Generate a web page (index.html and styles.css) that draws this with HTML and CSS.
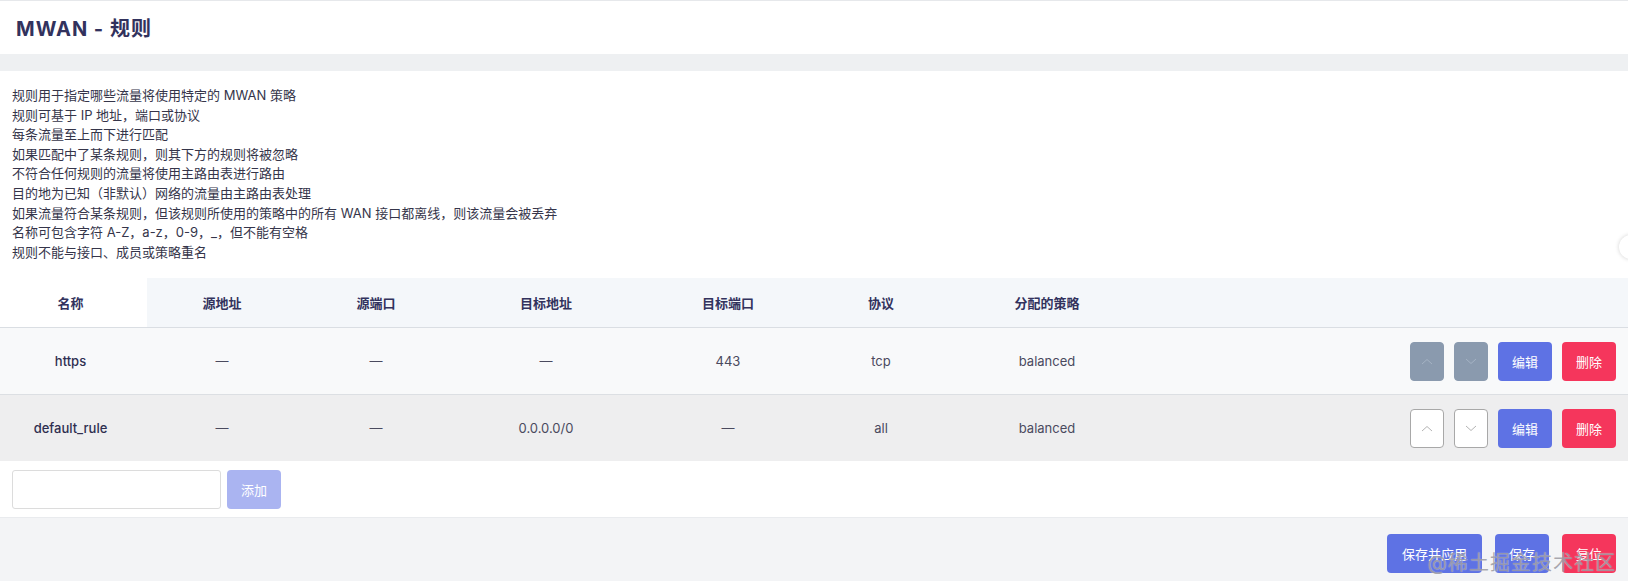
FILE: index.html
```html
<!DOCTYPE html>
<html lang="zh-CN">
<head>
    <meta charset="UTF-8">
    <meta name="viewport" content="width=device-width, initial-scale=1.0">
    <title>MWAN - 规则</title>
    <link rel="stylesheet" href="styles.css">
</head>
<body>
    <header class="topbar">
        <h2>MWAN - 规则</h2>
    </header>

    <main class="card">
        <div class="desc">
            规则用于指定哪些流量将使用特定的 MWAN 策略<br>
            规则可基于 IP 地址，端口或协议<br>
            每条流量至上而下进行匹配<br>
            如果匹配中了某条规则，则其下方的规则将被忽略<br>
            不符合任何规则的流量将使用主路由表进行路由<br>
            目的地为已知（非默认）网络的流量由主路由表处理<br>
            如果流量符合某条规则，但该规则所使用的策略中的所有 WAN 接口都离线，则该流量会被丢弃<br>
            名称可包含字符 A-Z，a-z，0-9，_，但不能有空格<br>
            规则不能与接口、成员或策略重名
        </div>

        <table class="rules">
            <thead>
                <tr>
                    <th class="col-name">名称</th>
                    <th class="col-src">源地址</th>
                    <th class="col-sport">源端口</th>
                    <th class="col-dst">目标地址</th>
                    <th class="col-dport">目标端口</th>
                    <th class="col-proto">协议</th>
                    <th class="col-policy">分配的策略</th>
                    <th class="col-actions"></th>
                </tr>
            </thead>
            <tbody>
                <tr class="row-odd">
                    <td class="name">https</td>
                    <td>—</td>
                    <td>—</td>
                    <td>—</td>
                    <td>443</td>
                    <td>tcp</td>
                    <td>balanced</td>
                    <td class="actions">
                        <button class="btn-move disabled" title="上移">
                            <svg width="12" height="7" viewBox="0 0 12 7"><path d="M1 6 L6 1.5 L11 6" fill="none" stroke="currentColor" stroke-width="1"/></svg>
                        </button>
                        <button class="btn-move disabled" title="下移">
                            <svg width="12" height="7" viewBox="0 0 12 7"><path d="M1 1 L6 5.5 L11 1" fill="none" stroke="currentColor" stroke-width="1"/></svg>
                        </button>
                        <button class="btn btn-edit">编辑</button>
                        <button class="btn btn-remove">删除</button>
                    </td>
                </tr>
                <tr class="row-even">
                    <td class="name">default_rule</td>
                    <td>—</td>
                    <td>—</td>
                    <td>0.0.0.0/0</td>
                    <td>—</td>
                    <td>all</td>
                    <td>balanced</td>
                    <td class="actions">
                        <button class="btn-move" title="上移">
                            <svg width="12" height="7" viewBox="0 0 12 7"><path d="M1 6 L6 1.5 L11 6" fill="none" stroke="currentColor" stroke-width="1"/></svg>
                        </button>
                        <button class="btn-move" title="下移">
                            <svg width="12" height="7" viewBox="0 0 12 7"><path d="M1 1 L6 5.5 L11 1" fill="none" stroke="currentColor" stroke-width="1"/></svg>
                        </button>
                        <button class="btn btn-edit">编辑</button>
                        <button class="btn btn-remove">删除</button>
                    </td>
                </tr>
            </tbody>
        </table>

        <div class="add-row">
            <input type="text" class="add-input">
            <button class="btn btn-add">添加</button>
        </div>
    </main>

    <footer class="page-actions">
        <button class="btn btn-apply">保存并应用</button>
        <button class="btn btn-save">保存</button>
        <button class="btn btn-reset">复位</button>
        <span class="watermark">@稀土掘金技术社区</span>
    </footer>

    <div class="side-dot"></div>
</body>
</html>
```

FILE: styles.css
```css
body {
    margin: 0;
    padding: 0;
    background-color: #eef0f2;
    font-family: Inter, "Noto Sans CJK SC", sans-serif;
    font-size: 13px;
    color: #32325d;
    position: relative;
    overflow: hidden;
}
.topbar {
    background-color: #fff;
    border-top: 1px solid #e6e8eb;
    height: 53px;
    display: flex;
    align-items: center;
    padding: 0 16px;
}
.topbar h2 {
    margin: 0;
    font-size: 20px;
    font-weight: 700;
    letter-spacing: 1px;
    color: #32325d;
}
.card {
    margin-top: 17px;
    background-color: #fff;
}
.desc {
    padding: 15px 12px 16px;
    line-height: 19.6px;
    color: #35354a;
}

/* table */
.rules {
    width: 100%;
    border-collapse: collapse;
    table-layout: fixed;
}
.rules th {
    height: 49px;
    padding: 0;
    font-weight: 700;
    text-align: center;
    background-color: #f4f7fa;
    border-bottom: 1px solid #dadee3;
}
.rules th.col-name {
    background-color: #fff;
}
.col-name { width: 141px; }
.col-src { width: 150px; }
.col-sport { width: 158px; }
.col-dst { width: 182px; }
.col-dport { width: 182px; }
.col-proto { width: 124px; }
.col-policy { width: 208px; }
.rules th.col-name,
.rules td.name {
    padding-right: 6px;
}
.rules td {
    height: 66px;
    padding: 0;
    text-align: center;
    color: #4a4a5e;
}
.rules td.name {
    color: #2e2e50;
    font-weight: 500;
}
.row-odd td {
    background-color: #f8f9fa;
    border-bottom: 1px solid #dcdfe3;
}
.row-even td {
    background-color: #eeeeef;
}
.rules td.actions {
    text-align: right;
    padding-right: 12px;
    font-size: 0;
}
.actions button {
    margin-left: 10px;
    vertical-align: middle;
}

/* buttons */
.btn {
    height: 39px;
    padding: 0 14px;
    border: none;
    border-radius: 4px;
    color: #fff;
    font-family: Inter, "Noto Sans CJK SC", sans-serif;
    font-size: 13px;
    cursor: pointer;
}
.btn-edit,
.btn-apply,
.btn-save {
    background-color: #5e72e4;
}
.btn-remove,
.btn-reset {
    background-color: #f5365c;
}
.btn-edit,
.btn-remove {
    width: 54px;
    padding: 0;
}
.btn-move {
    width: 34px;
    height: 39px;
    padding: 0;
    border: 1px solid #a8a8a8;
    border-radius: 4px;
    background-color: #fff;
    color: #b4b4b4;
    display: inline-flex;
    align-items: center;
    justify-content: center;
    cursor: pointer;
}
.btn-move.disabled {
    background-color: #8a9aae;
    border-color: #8a9aae;
    color: #a5b3c4;
    cursor: default;
}

/* add rule */
.add-row {
    display: flex;
    gap: 6px;
    padding: 9px 12px 8px;
}
.add-input {
    width: 209px;
    height: 39px;
    box-sizing: border-box;
    border: 1px solid #dcdcdc;
    border-radius: 3px;
    padding: 0 8px;
    font-size: 13px;
}
.btn-add {
    width: 54px;
    padding: 0;
    background-color: #aab4f1;
    cursor: default;
}

/* save / apply */
.page-actions {
    position: relative;
    display: flex;
    justify-content: flex-end;
    gap: 13px;
    padding: 16px 12px 9px;
    background-color: #f3f4f6;
    border-top: 1px solid #e9ebee;
}
.btn-apply {
    width: 95px;
    padding: 0;
}
.btn-save,
.btn-reset {
    width: 54px;
    padding: 0;
}
.watermark {
    position: absolute;
    right: 12px;
    bottom: 6px;
    font-size: 20px;
    color: rgba(130, 130, 140, 0.7);
    text-shadow: 0 0 1px rgba(255, 255, 255, 0.7);
    letter-spacing: 1px;
    pointer-events: none;
}
.side-dot {
    position: absolute;
    right: -15px;
    top: 235px;
    width: 24px;
    height: 24px;
    border-radius: 50%;
    background-color: #fff;
    box-shadow: 0 0 4px rgba(0, 0, 0, 0.18);
}
```
